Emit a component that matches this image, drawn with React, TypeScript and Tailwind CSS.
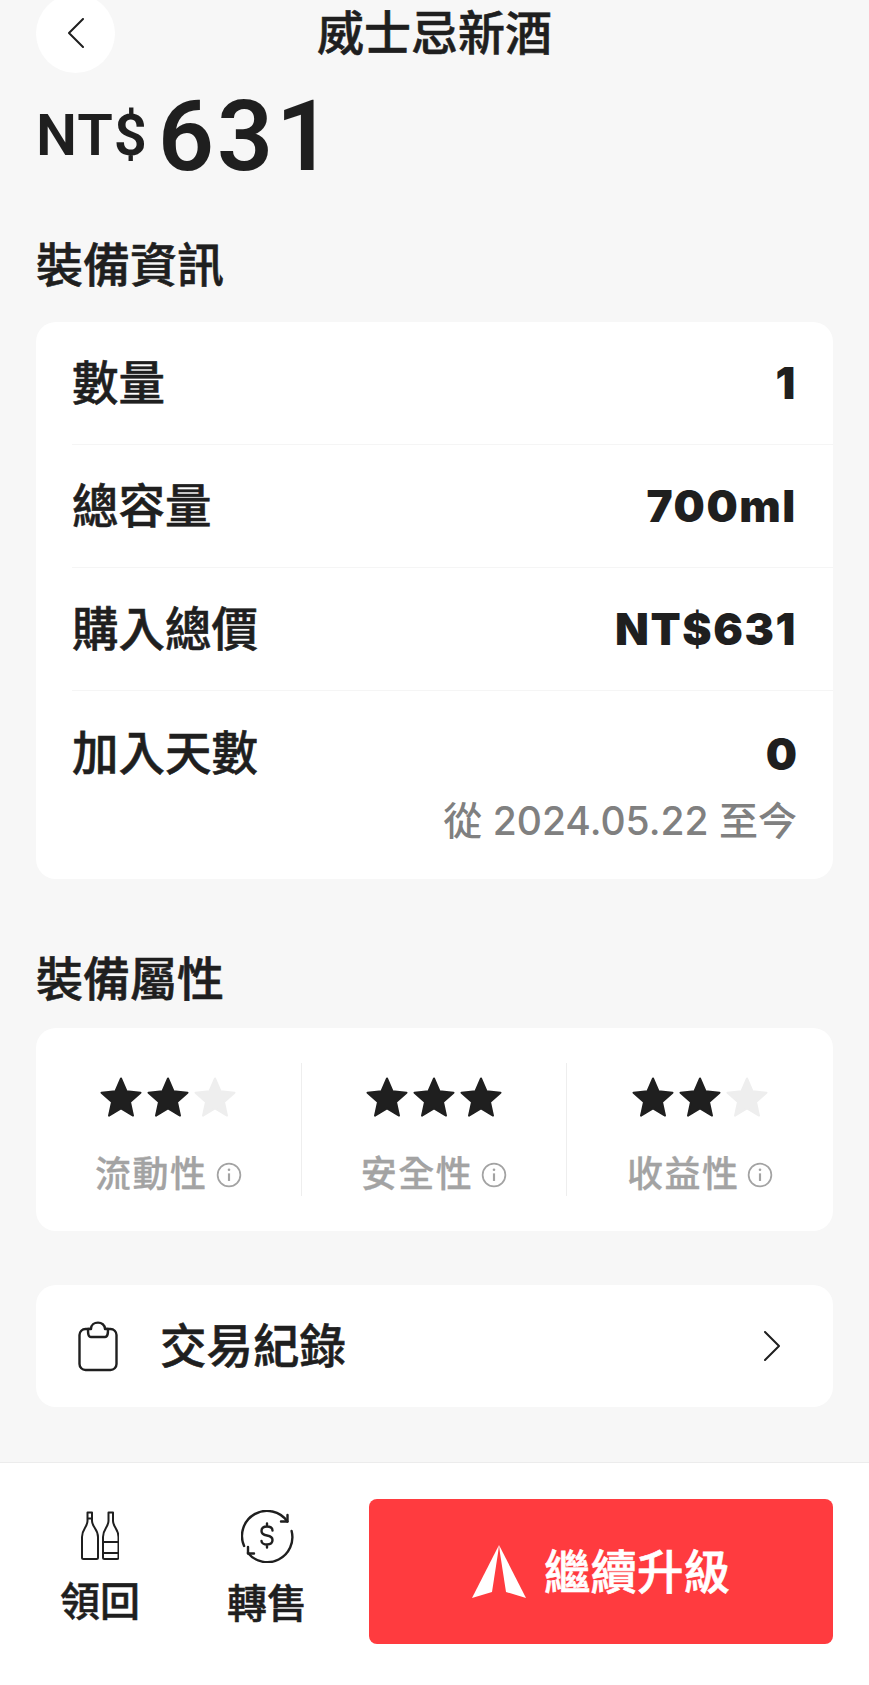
const cjk = { fontFamily: '"Liberation Sans", "Noto Sans CJK TC", sans-serif' };
const heavy = { fontFamily: 'Inter, sans-serif' };
const price = { fontFamily: 'Roboto, sans-serif' };
const sub = { fontFamily: 'Inter, "Noto Sans CJK TC", sans-serif' };

const infoRows = [
  { label: '數量', value: '1' },
  { label: '總容量', value: '700ml' },
  { label: '購入總價', value: 'NT$631' },
];

const attributes = [
  { label: '流動性', stars: 2 },
  { label: '安全性', stars: 3 },
  { label: '收益性', stars: 2 },
];

function Star({ filled }: { filled: boolean }) {
  const color = filled ? '#1f1f1f' : '#eeeeee';
  return (
    <svg viewBox="0 0 42 41" className="w-[42px] h-[41px]">
      <path
        d="M21 1.5 L26.6 14.3 L40.5 15.7 L30 24.9 L33 38.6 L21 31.5 L9 38.6 L12 24.9 L1.5 15.7 L15.4 14.3 Z"
        fill={color}
        stroke={color}
        strokeWidth="2"
        strokeLinejoin="round"
      />
    </svg>
  );
}

function InfoIcon() {
  return (
    <svg viewBox="0 0 24 24" className="w-[26px] h-[26px] text-[#a3a3a3]" fill="none" stroke="currentColor">
      <circle cx="12" cy="12" r="10.5" strokeWidth="1.6" />
      <path d="M12 10.5 V17.5" strokeWidth="2" />
      <circle cx="12" cy="7.2" r="1.2" fill="currentColor" stroke="none" />
    </svg>
  );
}

function Chevron({ dir }: { dir: 'left' | 'right' }) {
  return (
    <svg viewBox="0 0 16 30" className="w-[16px] h-[30px]" fill="none" stroke="#1f1f1f" strokeWidth="2" strokeLinecap="round" strokeLinejoin="round">
      <path d={dir === 'left' ? 'M15 1 L1 15 L15 29' : 'M1 1 L15 15 L1 29'} />
    </svg>
  );
}

function ClipboardIcon() {
  return (
    <svg viewBox="0 0 40 51" className="w-[40px] h-[51px]" fill="none" stroke="#1f1f1f" strokeWidth="2.4" strokeLinejoin="round">
      <rect x="1.5" y="8" width="37" height="41" rx="6" />
      <path d="M10 8 C10 12 10 16 13 16 H27 C30 16 30 12 30 8 H27 C27 -0.5 13 -0.5 13 8 Z" fill="#ffffff" />
    </svg>
  );
}

function BottlesIcon() {
  return (
    <svg viewBox="0 0 38 49" className="w-[38px] h-[49px]" fill="none" stroke="#1f1f1f" strokeWidth="2" strokeLinejoin="round">
      <path d="M6.5 1.5 H11 V10 C11 16 17 18 17 26 V46.5 C17 47.5 16.5 48 15.5 48 H2.5 C1.5 48 1 47.5 1 46.5 V26 C1 18 6.5 16 6.5 10 Z" />
      <path d="M6.5 7.5 H11" />
      <path d="M27.5 1.5 H32 V10 C32 16 37.5 18 37.5 26 V46.5 C37.5 47.5 37 48 36 48 H23.5 C22.5 48 22 47.5 22 46.5 V26 C22 18 27.5 16 27.5 10 Z" />
      <path d="M22 31 H37.5 M22 42 H37.5" />
    </svg>
  );
}

function ResellIcon() {
  return (
    <svg viewBox="0 0 53 53" className="w-[53px] h-[53px]" fill="none" stroke="#1f1f1f" strokeWidth="2.4" strokeLinecap="round" strokeLinejoin="round">
      <path d="M3.1 36 A25 25 0 0 1 46.4 11.5" />
      <path d="M40 11.5 H46.5 V5" />
      <path d="M50.6 21 A25 25 0 0 1 7 43" />
      <path d="M13 43.5 H7 V37" />
      <path d="M31.5 20.5 C31.5 17.5 29 16.5 26 16.5 C22.5 16.5 20.5 18 20.5 21 C20.5 24 23 25 26 25.5 C29 26 31.5 27 31.5 30 C31.5 33 29 34.5 26 34.5 C23 34.5 20.5 33 20.5 31 M26 13.5 V16.5 M26 34.5 V37.5" />
    </svg>
  );
}

function UpgradeIcon() {
  return (
    <svg viewBox="0 0 54 54" className="w-[54px] h-[54px]">
      <path d="M27 0 L0 53 L20 47 L26 8 Z" fill="#ffffff" />
      <path d="M27 0 L54 53 L34 47 L28 8 Z" fill="#ffffff" />
    </svg>
  );
}

export default function App() {
  return (
    <div style={cjk} className="w-[869px] h-[1685px] overflow-hidden flex flex-col bg-[#f7f7f7] text-[#1f1f1f]">
      <div className="px-[36px]">
        {/* Header */}
        <div className="grid grid-cols-[1fr_auto_1fr] grid-rows-[66px] items-center">
          <button className="w-[79px] h-[79px] rounded-full bg-white flex items-center justify-center">
            <Chevron dir="left" />
          </button>
          <h1 className="text-[47px] leading-[47px] font-medium [-webkit-text-stroke:0.6px]">威士忌新酒</h1>
          <div />
        </div>

        {/* Price */}
        <div style={price} className="flex items-start gap-[10px] h-[110px] pt-[22px]">
          <span className="text-[58px] leading-[58px] mt-[18px] font-semibold tracking-[1px]">NT$</span>
          <span className="text-[98px] leading-[98px] font-semibold tracking-[3px]">631</span>
        </div>

        {/* Info */}
        <h2 className="text-[47px] leading-[46px] font-medium [-webkit-text-stroke:0.6px] mt-[67px] mb-[33px]">裝備資訊</h2>
        <div className="bg-white rounded-[20px] pl-[36px]">
          {infoRows.map((row) => (
            <div key={row.label} className="flex items-center justify-between h-[123px] pr-[36px] border-b border-[#f5f5f5]">
              <span className="text-[46.5px] pt-[3px] font-medium [-webkit-text-stroke:0.6px]">{row.label}</span>
              <span className="text-[44px] font-black tracking-[1.6px]" style={heavy}>{row.value}</span>
            </div>
          ))}
          <div className="pb-[35px]">
            <div className="flex items-start justify-between h-[107px] pt-[38px] pr-[36px]">
              <span className="text-[46.5px] leading-[50px] font-medium [-webkit-text-stroke:0.6px]">加入天數</span>
              <span className="text-[44px] leading-[50px] font-black" style={heavy}>0</span>
            </div>
            <div style={sub} className="text-right pr-[36px] text-[39px] leading-[46px] font-medium text-[#808080]">從 2024.05.22 至今</div>
          </div>
        </div>

        {/* Attributes */}
        <h2 className="text-[47px] leading-[46px] font-medium [-webkit-text-stroke:0.6px] mt-[78px] mb-[25px]">裝備屬性</h2>
        <div className="bg-white rounded-[20px] py-[35px] grid grid-cols-3">
          {attributes.map((attr, i) => (
            <div key={attr.label} className={`flex flex-col items-center h-[133px] pt-[14px] ${i < 2 ? 'border-r border-[#eeeeee]' : ''}`}>
              <div className="flex gap-[5px]">
                {[0, 1, 2].map((n) => (
                  <Star key={n} filled={n < attr.stars} />
                ))}
              </div>
              <div className="flex items-center gap-[8px] mt-[37px] text-[#a3a3a3]">
                <span className="text-[36px] leading-[40px] font-medium [-webkit-text-stroke:0.3px] tracking-[1.5px]">{attr.label}</span>
                <InfoIcon />
              </div>
            </div>
          ))}
        </div>

        {/* Transactions */}
        <div className="bg-white rounded-[20px] h-[122px] mt-[54px] flex items-center pl-[42px] pr-[53px]">
          <ClipboardIcon />
          <span className="text-[46.5px] pt-[3px] font-medium [-webkit-text-stroke:0.6px] ml-[42px] flex-1">交易紀錄</span>
          <Chevron dir="right" />
        </div>
      </div>

      {/* Footer */}
      <div className="flex-1 mt-[55px] bg-white border-t border-[#ececec] pt-[36px] pr-[36px] pl-[50px] flex items-start">
        <div className="flex flex-col items-center w-[100px] pt-[12px]">
          <BottlesIcon />
          <span className="text-[40px] leading-[40px] font-medium [-webkit-text-stroke:0.5px] mt-[22px]">領回</span>
        </div>
        <div className="flex flex-col items-center w-[100px] ml-[67px] pt-[11px]">
          <ResellIcon />
          <span className="text-[40px] leading-[40px] font-medium [-webkit-text-stroke:0.5px] mt-[21px]">轉售</span>
        </div>
        <button className="ml-[52px] flex-1 h-[145px] rounded-[8px] bg-[#ff3b3f] flex items-center justify-center gap-[18px]">
          <UpgradeIcon />
          <span className="text-[46.5px] pt-[4px] font-medium [-webkit-text-stroke:0.6px] text-white">繼續升級</span>
        </button>
      </div>
    </div>
  );
}
